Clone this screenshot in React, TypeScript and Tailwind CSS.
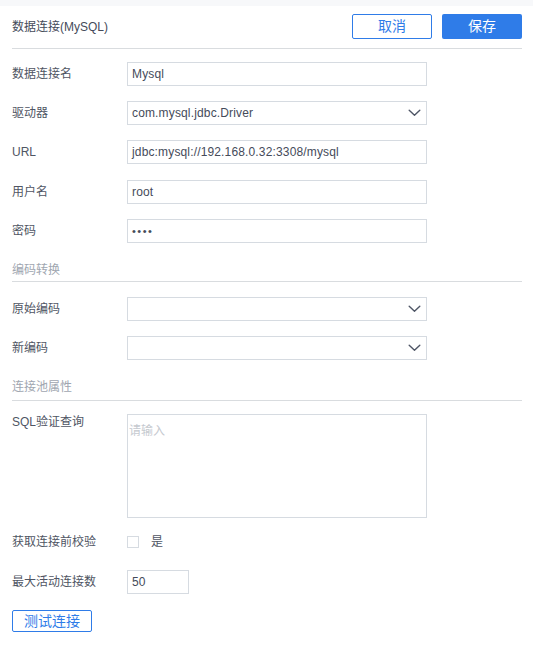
import React from "react";

const font = { fontFamily: '"Liberation Sans", "Noto Sans CJK SC", sans-serif' };

function Chevron() {
  return (
    <svg width="13" height="8" viewBox="0 0 13 8" fill="none" className="shrink-0">
      <path d="M1.2 1.3L6.5 6.3L11.8 1.3" stroke="#4f5666" strokeWidth="1.4" strokeLinecap="round" strokeLinejoin="round" />
    </svg>
  );
}

function Row({ label, children, mt = "mt-[15px]" }: { label: string; children: React.ReactNode; mt?: string }) {
  return (
    <div className={`flex items-center ${mt}`}>
      <div className="w-[115px] shrink-0 text-[12px] text-[#4f5563]">{label}</div>
      {children}
    </div>
  );
}

function Field({ value, select, w = "w-[300px]", dots }: { value?: string; select?: boolean; w?: string; dots?: boolean }) {
  return (
    <div className={`${w} h-[24px] border border-[#d6dbe1] flex items-center justify-between pl-[4px] pr-[5px] text-[12px] text-[#454b5a]`}>
      <span className={dots ? "tracking-[1.5px] text-[11px]" : "tracking-[0.15px]"}>{value}</span>
      {select && <Chevron />}
    </div>
  );
}

export default function App() {
  return (
    <div className="w-[533px] h-[645px] bg-white" style={font}>
      <div className="h-[6px] bg-[#f7f8fa]" />
      <div className="pl-3 pr-[11px]">
        <div className="h-[43px] flex items-center justify-between border-b border-[#d9dcdf]">
          <div className="text-[12px] text-[#454b5a]">数据连接(MySQL)</div>
          <div className="flex items-center gap-[10px] mt-[-1px]">
            <div className="w-[80px] h-[25px] border border-[#2f7ce8] rounded-[2px] flex items-center justify-center text-[14px] text-[#2f7ce8]">
              取消
            </div>
            <div className="w-[80px] h-[25px] bg-[#2f7ce8] rounded-[2px] flex items-center justify-center text-[14px] text-white">
              保存
            </div>
          </div>
        </div>

        <Row label="数据连接名" mt="mt-[13px]">
          <Field value="Mysql" />
        </Row>
        <Row label="驱动器">
          <Field value="com.mysql.jdbc.Driver" select />
        </Row>
        <Row label="URL">
          <Field value="jdbc:mysql://192.168.0.32:3308/mysql" />
        </Row>
        <Row label="用户名" mt="mt-[16px]">
          <Field value="root" />
        </Row>
        <Row label="密码">
          <Field value="••••" dots />
        </Row>

        <div className="mt-[17px] pb-[1px] border-b border-[#d9dcdf]">
          <div className="h-[20px] leading-[20px] text-[12px] text-[#a0a6b0]">编码转换</div>
        </div>

        <Row label="原始编码" mt="mt-[15px]">
          <Field select />
        </Row>
        <Row label="新编码">
          <Field select />
        </Row>

        <div className="mt-[17px] pb-[3px] border-b border-[#d9dcdf]">
          <div className="h-[20px] leading-[20px] text-[12px] text-[#a0a6b0]">连接池属性</div>
        </div>

        <div className="flex items-start mt-[13px]">
          <div className="w-[115px] shrink-0 text-[12px] leading-[16px] text-[#4f5563]">SQL验证查询</div>
          <div className="w-[300px] h-[104px] border border-[#d6dbe1] pl-[1px] pt-[6px] text-[12px] leading-[20px] text-[#c5c9cf]">
            请输入
          </div>
        </div>

        <div className="flex items-center h-[24px] mt-[12px]">
          <div className="w-[115px] shrink-0 text-[12px] text-[#4f5563]">获取连接前校验</div>
          <div className="w-[12px] h-[12px] border border-[#d6dbe1]" />
          <div className="ml-[12px] text-[12px] text-[#4f5563]">是</div>
        </div>

        <Row label="最大活动连接数" mt="mt-[16px]">
          <Field value="50" w="w-[62px]" />
        </Row>

        <div className="mt-[16px] w-[80px] h-[22px] border border-[#2f7ce8] rounded-[2px] flex items-center justify-center text-[14px] text-[#2f7ce8]">
          测试连接
        </div>
      </div>
    </div>
  );
}
